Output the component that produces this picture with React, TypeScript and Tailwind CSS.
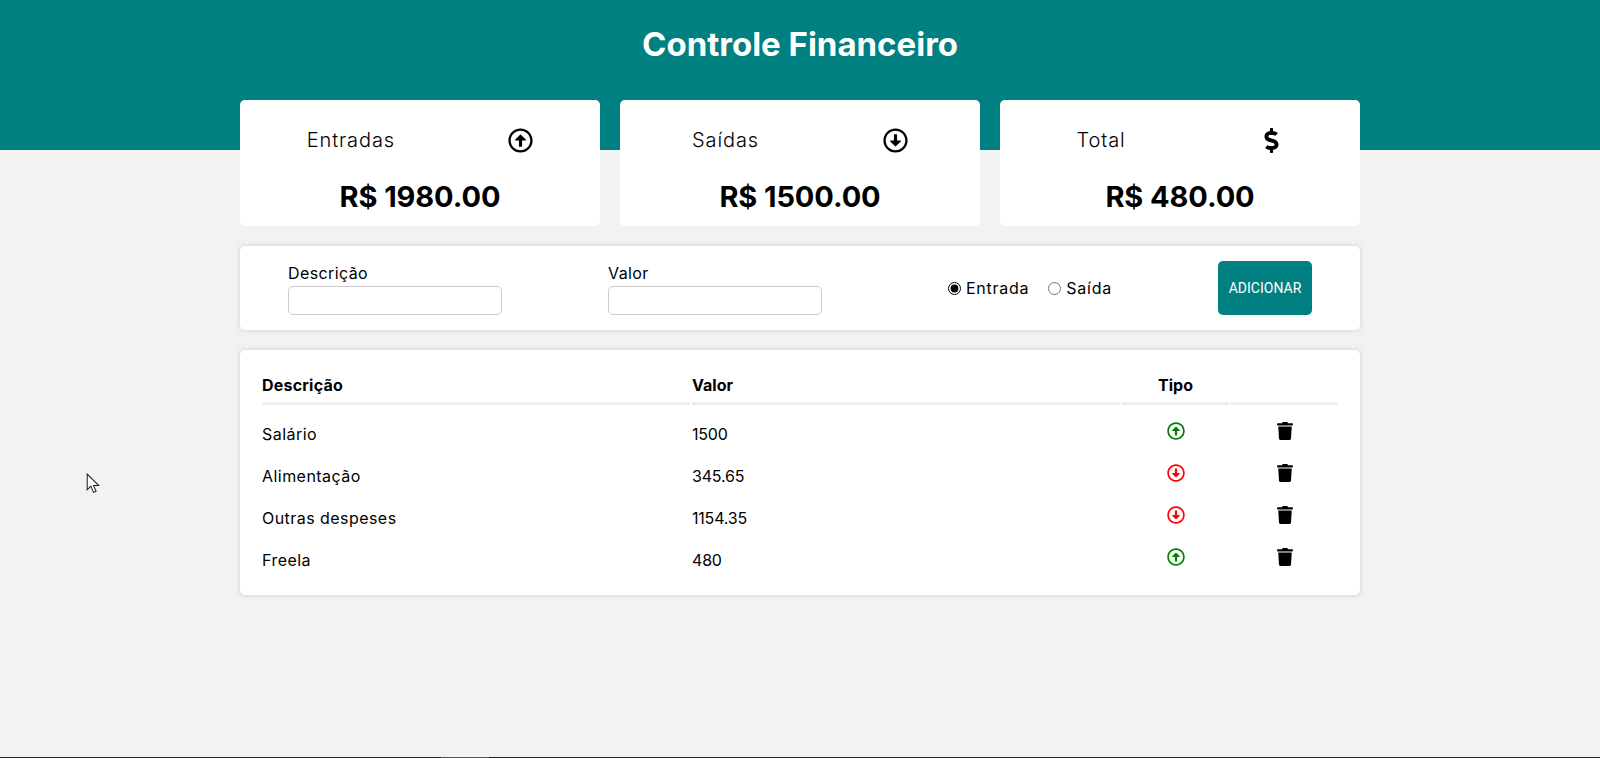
import { FaRegArrowAltCircleUp, FaRegArrowAltCircleDown, FaDollarSign, FaTrash } from 'react-icons/fa';

const summary = [
  { title: 'Entradas', value: 'R$ 1980.00', icon: <FaRegArrowAltCircleUp size={25} /> },
  { title: 'Saídas', value: 'R$ 1500.00', icon: <FaRegArrowAltCircleDown size={25} /> },
  { title: 'Total', value: 'R$ 480.00', icon: <FaDollarSign size={25} /> },
];

const transactions = [
  { desc: 'Salário', amount: '1500', expense: false },
  { desc: 'Alimentação', amount: '345.65', expense: true },
  { desc: 'Outras despeses', amount: '1154.35', expense: true },
  { desc: 'Freela', amount: '480', expense: false },
];

function Field({ label }: { label: string }) {
  return (
    <div className="flex w-[214px] flex-col">
      <label className="pb-[2px] text-[16px] leading-[22px] tracking-[0.4px]">{label}</label>
      <input className="h-[29px] w-[214px] rounded-[5px] border border-[#cccccc] bg-white" />
    </div>
  );
}

export default function App() {
  return (
    <div className="relative flex h-screen flex-col overflow-hidden bg-[#f2f2f2] font-['Inter','Liberation_Sans',sans-serif] text-black">
      <header className="h-[150px] shrink-0 bg-[#008080] pt-[22px] text-center">
        <h1 className="text-[33px] leading-[44px] font-bold text-white">Controle Financeiro</h1>
      </header>

      <main className="mx-auto -mt-[50px] flex w-[1120px] flex-1 flex-col">
        <section className="grid grid-cols-3 gap-5">
          {summary.map((card) => (
            <div key={card.title} className="h-[126px] rounded-[5px] bg-white px-[10px] pt-[25px]">
              <div className="flex h-[30px] items-center justify-around">
                <p className="text-[20px] font-[350] tracking-[0.9px]">{card.title}</p>
                {card.icon}
              </div>
              <p className="mt-[22px] text-center text-[29px] leading-[40px] font-bold tracking-[-0.1px]">{card.value}</p>
            </div>
          ))}
        </section>

        <form className="mt-5 flex h-[84px] items-center justify-between rounded-[5px] bg-white px-12 shadow-[0_0_5px_#ccc]">
          <Field label="Descrição" />
          <Field label="Valor" />
          <div className="flex w-[184px] items-center pl-5 text-[16px] tracking-[0.75px]">
            <input type="radio" name="tipo" defaultChecked className="mr-[5px] h-[13px] w-[13px] accent-black" />
            <label>Entrada</label>
            <input type="radio" name="tipo" className="mr-[5px] ml-[19px] h-[13px] w-[13px] accent-black" />
            <label>Saída</label>
          </div>
          <button type="button" className="h-[54px] w-[94px] rounded-[5px] bg-[#008080] font-['Roboto',sans-serif] text-[14px] text-white">
            ADICIONAR
          </button>
        </form>

        <section className="mt-5 h-[245px] rounded-[5px] bg-white px-5 pt-[21px] shadow-[0_0_5px_#ccc]">
          <table className="w-full table-fixed border-separate border-spacing-[2px] text-[16px]">
            <thead>
              <tr>
                <th className="w-[428px] border-b-[3px] border-[#eeeeee] pb-[5px] text-left font-bold tracking-[0.2px]">Descrição</th>
                <th className="w-[428px] border-b-[3px] border-[#eeeeee] pb-[5px] text-left font-bold">Valor</th>
                <th className="w-[107px] border-b-[3px] border-[#eeeeee] pb-[5px] text-center font-bold">Tipo</th>
                <th className="border-b-[3px] border-[#eeeeee] pb-[5px]"></th>
              </tr>
            </thead>
            <tbody>
              <tr>
                <td colSpan={4} className="h-[2px]"></td>
              </tr>
              {transactions.map((row) => (
                <tr key={row.desc} className="h-[40px]">
                  <td className="pt-[6px] tracking-[0.45px]">{row.desc}</td>
                  <td className="pt-[6px] tracking-[-0.2px]">{row.amount}</td>
                  <td>
                    <div className="flex justify-center">
                      {row.expense ? <FaRegArrowAltCircleDown size={18} color="red" /> : <FaRegArrowAltCircleUp size={18} color="green" />}
                    </div>
                  </td>
                  <td>
                    <div className="flex justify-center">
                      <FaTrash size={18} />
                    </div>
                  </td>
                </tr>
              ))}
            </tbody>
          </table>
        </section>
      </main>

      <div className="flex h-px shrink-0 bg-[#222222]">
        <div className="ml-[441px] w-[48px] bg-[#555555]"></div>
      </div>

      {/* mouse pointer captured in the screenshot */}
      <svg className="absolute top-[473px] left-[86px]" width="15" height="23" viewBox="0 0 14 22">
        <path d="M1 1 L1 16 L4.5 12.5 L7 18.5 L9.5 17.5 L7 12 L12 12 Z" fill="#fff" stroke="#222" strokeWidth="1" />
      </svg>
    </div>
  );
}
